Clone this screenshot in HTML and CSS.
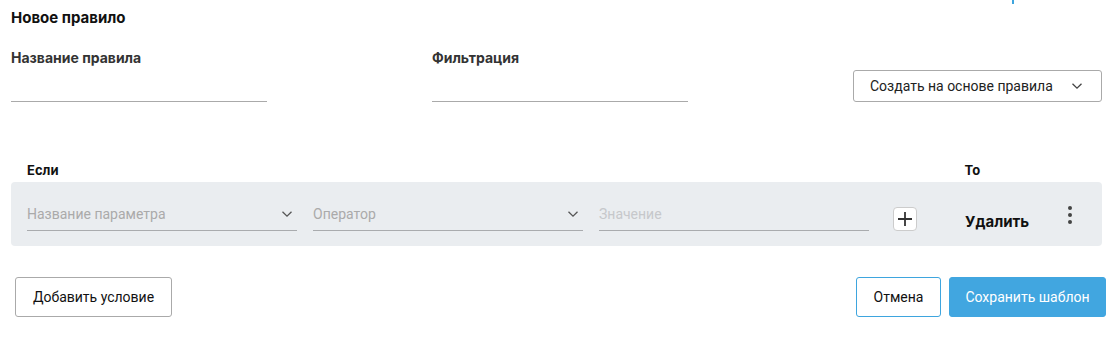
FILE: index.html
```html
<!DOCTYPE html>
<html lang="ru">
<head>
    <meta charset="UTF-8" />
    <title>Новое правило</title>
    <link rel="stylesheet" href="styles.css">
</head>
<body>
    <div class="page">
        <div class="top-link"></div>
        <h1 class="title">Новое правило</h1>

        <div class="head">
            <div class="field">
                <label class="label">Название правила</label>
                <div class="line"></div>
            </div>
            <div class="field">
                <label class="label">Фильтрация</label>
                <div class="line"></div>
            </div>
            <button class="select-btn">
                <span>Создать на основе правила</span>
                <svg width="12" height="8" viewBox="0 0 12 8"><path d="M1.5 1.8 6 6.2l4.5-4.4" fill="none" stroke="#444" stroke-width="1.3"/></svg>
            </button>
        </div>

        <div class="cols">
            <span class="col-if">Если</span>
            <span class="col-then">То</span>
        </div>

        <div class="rule">
            <div class="cond">
                <span>Название параметра</span>
                <svg width="12" height="8" viewBox="0 0 12 8"><path d="M1.5 1.8 6 6.2l4.5-4.4" fill="none" stroke="#555" stroke-width="1.3"/></svg>
            </div>
            <div class="cond">
                <span>Оператор</span>
                <svg width="12" height="8" viewBox="0 0 12 8"><path d="M1.5 1.8 6 6.2l4.5-4.4" fill="none" stroke="#555" stroke-width="1.3"/></svg>
            </div>
            <div class="cond value">
                <span>Значение</span>
            </div>
            <button class="plus">
                <svg width="16" height="16" viewBox="0 0 16 16"><path d="M8 1v14M1 8h14" stroke="#333" stroke-width="1.8"/></svg>
            </button>
            <span class="action">Удалить</span>
            <button class="more">
                <svg width="6" height="20" viewBox="0 0 6 20"><circle cx="3" cy="3" r="2" fill="#444"/><circle cx="3" cy="10" r="2" fill="#444"/><circle cx="3" cy="17" r="2" fill="#444"/></svg>
            </button>
        </div>

        <div class="footer">
            <button class="btn btn-add">Добавить условие</button>
            <div class="footer-right">
                <button class="btn btn-outline">Отмена</button>
                <button class="btn btn-primary">Сохранить шаблон</button>
            </div>
        </div>
    </div>
</body>
</html>
```

FILE: styles.css
```css
* {
    margin: 0;
    padding: 0;
    box-sizing: border-box;
}
body {
    font-family: Roboto, "Liberation Sans", sans-serif;
    color: #222;
    background: #fff;
}
button {
    font-family: inherit;
    background: none;
    border: none;
    cursor: pointer;
}
.page {
    position: relative;
    padding: 8px 10px 0 11px;
    width: 1112px;
    height: 343px;
}
.top-link {
    position: absolute;
    top: 0;
    left: 1012px;
    width: 2px;
    height: 4px;
    background: #3ea5de;
}
.title,
.label,
.cols,
.action {
    font-family: Inter, Roboto, sans-serif;
}
.title {
    font-size: 15px;
    font-weight: 700;
    color: #111;
    line-height: 20px;
}
.head {
    display: flex;
    align-items: flex-start;
    margin-top: 22px;
}
.field {
    width: 256px;
    margin-right: 165px;
}
.label {
    display: block;
    font-size: 14px;
    font-weight: 700;
    color: #333;
    line-height: 16px;
}
.line {
    height: 1px;
    background: #aaa;
    margin-top: 35px;
}
.select-btn {
    margin-left: auto;
    margin-top: 20px;
    margin-right: 0;
    width: 249px;
    height: 32px;
    border: 1px solid #aaa;
    border-radius: 3px;
    display: flex;
    align-items: center;
    justify-content: space-between;
    padding: 0 18px 0 16px;
    font-size: 14px;
    color: #222;
}
.cols {
    display: flex;
    margin-top: 60px;
    padding-left: 16px;
    font-size: 13px;
    font-weight: 700;
    color: #111;
    line-height: 16px;
}
.col-then {
    margin-left: 906px;
}
.rule {
    margin-top: 4px;
    width: 1091px;
    height: 64px;
    background: #eaedf0;
    border-radius: 4px;
    display: flex;
    align-items: center;
    padding: 0 16px;
}
.cond {
    width: 270px;
    height: 25px;
    margin-right: 16px;
    margin-top: 8px;
    border-bottom: 1px solid #a9abae;
    display: flex;
    align-items: flex-start;
    justify-content: space-between;
    padding-right: 4px;
    font-size: 14px;
    color: #aaa;
}
.cond svg {
    margin-top: 4px;
}
.cond.value {
    color: #c6c8cb;
    margin-right: 24px;
}
.plus {
    width: 24px;
    height: 24px;
    background: #fff;
    border: 1px solid #ccc;
    border-radius: 4px;
    display: flex;
    align-items: center;
    justify-content: center;
    margin-top: 10px;
}
.action {
    margin-left: 48px;
    margin-top: 14px;
    font-size: 15px;
    font-weight: 700;
    color: #111;
}
.more {
    margin-left: 38px;
    margin-top: 2px;
    display: flex;
}
.footer {
    display: flex;
    justify-content: space-between;
    margin-top: 31px;
    padding-left: 4px;
    width: 1095px;
}
.footer-right {
    display: flex;
    gap: 8px;
}
.btn {
    height: 40px;
    padding: 0;
    border: 1px solid #aaa;
    border-radius: 3px;
    font-size: 14px;
    color: #111;
    background: #fff;
}
.btn-add {
    width: 157px;
}
.btn-outline {
    border-color: #3ea5de;
    width: 85px;
}
.btn-primary {
    border-color: #41a6e0;
    background: #41a6e0;
    color: #fff;
    width: 157px;
}
```
